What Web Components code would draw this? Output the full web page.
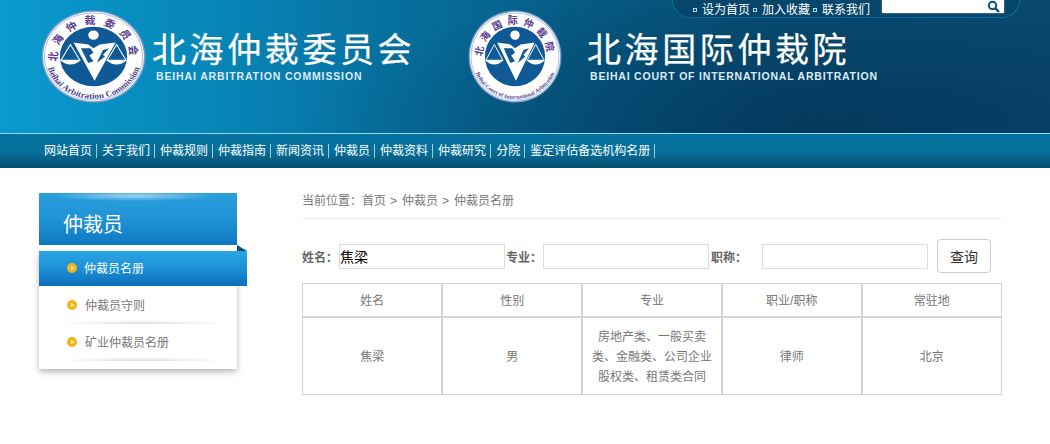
<!doctype html>
<html lang="zh">
<head>
<meta charset="utf-8">
<title>仲裁员名册</title>
<style>
html, body { margin: 0; background: #fff; }
body { font-family: "Liberation Sans", "Noto Sans CJK SC", sans-serif; font-size: 12px; color: #666; }
</style>
</head>
<body>
<site-header>
  <site-logo name="北海仲裁委员会" en="BEIHAI ARBITRATION COMMISSION" ring="北海仲裁委员会" ring-en="Beihai Arbitration Commission" seal-w="105" style="--title-gap:6px;--title-space:3.6px;--en-space:.86px;--en-left:4px;--ring-space:6.5;--en-size:8.8"></site-logo>
  <site-logo name="北海国际仲裁院" en="BEIHAI COURT OF INTERNATIONAL ARBITRATION" ring="北海国际仲裁院" ring-en="Beihai Court of International Arbitration" seal-w="94" style="--title-gap:25px;--title-space:3.6px;--en-space:.8px;--en-left:3px;--ring-space:5;--en-size:6"></site-logo>
</site-header>
<site-nav>
  <a>网站首页</a><a>关于我们</a><a>仲裁规则</a><a>仲裁指南</a><a>新闻资讯</a><a>仲裁员</a><a>仲裁资料</a><a>仲裁研究</a><a>分院</a><a>鉴定评估备选机构名册</a>
</site-nav>
<page-body>
  <side-menu slot="side" heading="仲裁员">
    <menu-item active>仲裁员名册</menu-item>
    <menu-item>仲裁员守则</menu-item>
    <menu-item>矿业仲裁员名册</menu-item>
  </side-menu>
  <bread-crumb></bread-crumb>
  <search-form></search-form>
  <result-table></result-table>
</page-body>

<script>
const sealMark = `
  <circle cx="50" cy="50" r="49.4" fill="#7f9ccc"/>
  <circle cx="50" cy="50" r="48" fill="#fff"/>
  <circle cx="50" cy="50" r="46.8" fill="none" stroke="#5d84b8" stroke-width=".5"/>
  <circle cx="50" cy="50" r="32" fill="#0f5a96"/>
  <circle cx="50" cy="27" r="5" fill="#fff"/>
  <path d="M31 35 L45 37 L50 41 L56 37 L71 35 L51 76 Z" fill="#fff"/>
  <path d="M38 41 L47 41 L50 46 L46 49 L50 55 L45 57 Z M53 57 L59 43 L65 41 L59 48 L61 50 Z" fill="#0f5a96"/>
  <path d="M28 37 L19 54 H37 Z M72 37 L63 54 H81 Z" fill="none" stroke="#fff" stroke-width="1"/>
  <path d="M18 54 Q28 63 38 54 Z M62 54 Q72 63 82 54 Z" fill="#fff"/>
`

function sealSvg(id, ring, ringEn, w, ringSpace, enSize) {
  return `<svg width="${w}" height="93" viewBox="0 0 100 100" preserveAspectRatio="none">
    <defs>
      <path id="${id}t" d="M50 84.5 A34.5 34.5 0 1 1 50.1 84.5"/>
      <path id="${id}b" d="M50 4.5 A45.5 45.5 0 1 0 50.1 4.5"/>
    </defs>
    ${sealMark}
    <text font-family="Noto Sans CJK SC, serif" font-weight="700" font-size="10.5" fill="#5b3a8f" text-anchor="middle"><textPath href="#${id}t" startOffset="50%" letter-spacing="${ringSpace}">${ring}</textPath></text>
    <text font-family="Liberation Serif, serif" font-weight="700" font-size="${enSize}" fill="#4b4590" text-anchor="middle"><textPath href="#${id}b" startOffset="50%">${ringEn}</textPath></text>
  </svg>`
}

let sealCount = 0

class SiteHeader extends HTMLElement {
  constructor() {
    super()
    this.attachShadow({ mode: 'open' })
    this.shadowRoot.innerHTML = `
<style>
:host {
  display: grid;
  grid-template-columns: 427px 1fr;
  align-items: start;
  position: relative;
  height: 133px;
  box-sizing: border-box;
  padding: 10px 0 0 41px;
  overflow: hidden;
  background:
    radial-gradient(ellipse 520px 150px at 820px 130px, rgba(0,40,75,.55), rgba(0,40,75,0)),
    linear-gradient(90deg, #0a9ace 0%, #0786b8 20%, #066f9e 38%, #065c85 55%, #084d73 75%, #0a4a70 100%);
}
.top {
  position: absolute;
  top: -1px;
  left: 672px;
  width: 348px;
  height: 19px;
  box-sizing: border-box;
  display: flex;
  align-items: center;
  padding-left: 20px;
  background: #07466b;
  border: 1px solid #0d6a94;
  border-top: 0;
  border-radius: 0 0 18px 18px;
  color: #fff;
  font-size: 12px;
}
.top span { margin-right: 3px; white-space: nowrap; }
.top span::before {
  content: '';
  display: inline-block;
  width: 2px;
  height: 2px;
  margin-right: 5px;
  border: 1px solid #b9d6e4;
  vertical-align: 2px;
}
.search {
  margin-left: 9px;
  width: 122px;
  height: 14px;
  margin-top: -4px;
  display: flex;
  justify-content: flex-end;
  align-items: center;
  padding-right: 4px;
  box-sizing: border-box;
  background: #fff;
  border-radius: 1px;
  box-shadow: 0 0 2px rgba(255,255,255,.6);
}
</style>
<slot></slot>
<div class="top">
  <span>设为首页</span><span>加入收藏</span><span>联系我们</span>
  <div class="search">
    <svg width="13" height="13" viewBox="0 0 13 13"><circle cx="5.5" cy="5.5" r="3.7" fill="none" stroke="#0e4f7a" stroke-width="2"/><path d="M8.3 8.3 L12 12" stroke="#0e4f7a" stroke-width="2.4"/></svg>
  </div>
</div>`
  }
}
customElements.define('site-header', SiteHeader)

class SiteLogo extends HTMLElement {
  connectedCallback() {
    if (this.shadowRoot) return
    this.attachShadow({ mode: 'open' })
    const a = n => this.getAttribute(n)
    const css = n => this.style.getPropertyValue(n).trim()
    const id = 's' + sealCount++
    this.shadowRoot.innerHTML = `
<style>
:host { display: flex; align-items: flex-start; gap: var(--title-gap); }
svg { display: block; flex: none; }
.txt { display: flex; flex-direction: column; margin-top: 18px; color: #fff; }
.cn { font: 400 34px/40px "Noto Sans CJK SC", sans-serif; letter-spacing: var(--title-space); white-space: nowrap; -webkit-text-stroke: .25px #fff; }
.en { font: 700 10.5px/12px "Liberation Sans", sans-serif; letter-spacing: var(--en-space); margin: 2px 0 0 var(--en-left); white-space: nowrap; color: #dcecf4; }
</style>
${sealSvg(id, a('ring'), a('ring-en'), a('seal-w'), css('--ring-space'), css('--en-size'))}
<div class="txt"><div class="cn">${a('name')}</div><div class="en">${a('en')}</div></div>`
  }
}
customElements.define('site-logo', SiteLogo)

class SiteNav extends HTMLElement {
  constructor() {
    super()
    this.attachShadow({ mode: 'open' })
    this.shadowRoot.innerHTML = `
<style>
:host {
  display: block;
  height: 35px;
  box-sizing: border-box;
  border-top: 1px solid #8fdcf0;
  padding-left: 44px;
  background: linear-gradient(180deg, #06729f 0%, #066f9b 50%, #04506f 100%);
}
.row { display: flex; height: 34px; align-items: center; color: #fff; font-size: 12px; }
::slotted(a) {
  color: #fff;
  white-space: nowrap;
  line-height: 14px;
  padding-right: 4px;
  margin-right: 5px;
  border-right: 1px solid rgba(255,255,255,.65);
}
</style>
<div class="row"><slot></slot></div>`
  }
}
customElements.define('site-nav', SiteNav)

class PageBody extends HTMLElement {
  constructor() {
    super()
    this.attachShadow({ mode: 'open' })
    this.shadowRoot.innerHTML = `
<style>
:host { display: flex; gap: 55px; padding: 25px 48px 0 39px; }
.main { width: 700px; flex: none; display: flex; flex-direction: column; }
</style>
<slot name="side"></slot>
<div class="main"><slot></slot></div>`
  }
}
customElements.define('page-body', PageBody)

class SideMenu extends HTMLElement {
  constructor() {
    super()
    this.attachShadow({ mode: 'open' })
    this.shadowRoot.innerHTML = `
<style>
:host { display: block; width: 208px; flex: none; }
.head {
  width: 198px;
  height: 52px;
  box-sizing: border-box;
  padding: 8px 0 0 24px;
  display: flex;
  align-items: center;
  color: #fff;
  font-size: 20px;
  background:
    radial-gradient(ellipse 80px 5px at 95px 3px, rgba(255,255,255,.55), rgba(255,255,255,0)),
    linear-gradient(180deg, #2a9fdc 0%, #1f93d6 50%, #0e78c0 100%);
}
.list {
  width: 198px;
  margin-top: 6px;
  padding-bottom: 8px;
  box-shadow: 0 3px 6px rgba(0,0,0,.28);
  background: #fff;
}
</style>
<div class="head"></div>
<div class="list"><slot></slot></div>`
    this.shadowRoot.querySelector('.head').textContent = this.getAttribute('heading')
  }
}
customElements.define('side-menu', SideMenu)

class MenuItem extends HTMLElement {
  constructor() {
    super()
    this.attachShadow({ mode: 'open' })
    this.shadowRoot.innerHTML = `
<style>
:host {
  display: flex;
  position: relative;
  align-items: center;
  gap: 8px;
  height: 37px;
  box-sizing: border-box;
  padding: 0 0 2px 28px;
  color: #777;
  font-size: 12px;
}
:host(:not([active]))::after {
  content: '';
  position: absolute;
  left: 18px;
  right: 10px;
  bottom: 0;
  height: 4px;
  background: radial-gradient(ellipse 50% 100% at 50% 100%, rgba(0,0,0,.14), rgba(0,0,0,0));
}
:host([active]) {
  gap: 7px;
  width: 208px;
  height: 35px;
  margin-bottom: 1px;
  color: #fff;
  background: linear-gradient(180deg, #2aa6e4 0%, #1e90d8 50%, #0c6fb9 100%);
}
:host([active])::before {
  content: '';
  position: absolute;
  top: -6px;
  right: 0;
  width: 10px;
  height: 6px;
  background: #0b4f85;
  clip-path: polygon(0 0, 100% 100%, 0 100%);
}
.dot {
  width: 10px;
  height: 10px;
  flex: none;
  border-radius: 50%;
  background: #f5b314;
  display: flex;
  align-items: center;
  justify-content: center;
}
.dot::after {
  content: '';
  border-left: 4px solid #fff3c8;
  border-top: 2.5px solid transparent;
  border-bottom: 2.5px solid transparent;
  margin-left: 1px;
}
</style>
<span class="dot"></span><slot></slot>`
  }
}
customElements.define('menu-item', MenuItem)

class BreadCrumb extends HTMLElement {
  constructor() {
    super()
    this.attachShadow({ mode: 'open' })
    this.shadowRoot.innerHTML = `
<style>
:host {
  display: flex;
  height: 26px;
  box-sizing: border-box;
  align-items: flex-start;
  border-bottom: 1px solid #e8e8e8;
  color: #777;
  font-size: 12px;
  line-height: 16px;
  white-space: nowrap;
}
.sep { margin: 0 5px 0 4px; }
</style>
<span>当前位置：</span><span>首页</span><span class="sep">&gt;</span><span>仲裁员</span><span class="sep">&gt;</span><span>仲裁员名册</span>`
  }
}
customElements.define('bread-crumb', BreadCrumb)

class SearchForm extends HTMLElement {
  constructor() {
    super()
    this.attachShadow({ mode: 'open' })
    this.shadowRoot.innerHTML = `
<style>
:host {
  display: flex;
  align-items: center;
  height: 34px;
  margin-top: 20px;
  font-size: 12px;
  font-weight: 700;
  color: #666;
}
label { white-space: nowrap; }
input {
  box-sizing: border-box;
  width: 166px;
  height: 25px;
  padding: 0;
  border: 1px solid #ddd;
  outline: 0;
  color: #000;
  font: 400 14px "Noto Sans CJK SC", sans-serif;
  background: #fff;
}
button {
  width: 54px;
  height: 34px;
  margin-left: 9px;
  padding: 0;
  border: 1px solid #ccc;
  border-radius: 4px;
  background: #fff;
  color: #333;
  font: 400 14px "Noto Sans CJK SC", sans-serif;
}
</style>
<label>姓名：</label><input style="margin-left:1px" value="焦梁">
<label style="margin-left:1px">专业：</label><input style="margin-left:1px">
<label style="margin-left:2px">职称：</label><input style="margin-left:15px">
<button>查询</button>`
  }
}
customElements.define('search-form', SearchForm)

class ResultTable extends HTMLElement {
  constructor() {
    super()
    this.attachShadow({ mode: 'open' })
    this.shadowRoot.innerHTML = `
<style>
:host { display: block; margin-top: 10px; }
table { width: 700px; table-layout: fixed; border-collapse: collapse; font-size: 12px; color: #777; text-align: center; }
th, td { border: 1px solid #d4d4d4; padding: 1px 6px 0; font-weight: 400; line-height: 20px; }
th { height: 31px; border-width: 1px 2px 2px 1px; }
td { height: 75px; border-right-width: 2px; }
th:last-child, td:last-child { border-right-width: 1px; }
</style>
<table>
  <tr><th>姓名</th><th>性别</th><th>专业</th><th>职业/职称</th><th>常驻地</th></tr>
  <tr><td>焦梁</td><td>男</td><td>房地产类、一般买卖类、金融类、公司企业股权类、租赁类合同</td><td>律师</td><td>北京</td></tr>
</table>`
  }
}
customElements.define('result-table', ResultTable)
</script>
</body>
</html>
